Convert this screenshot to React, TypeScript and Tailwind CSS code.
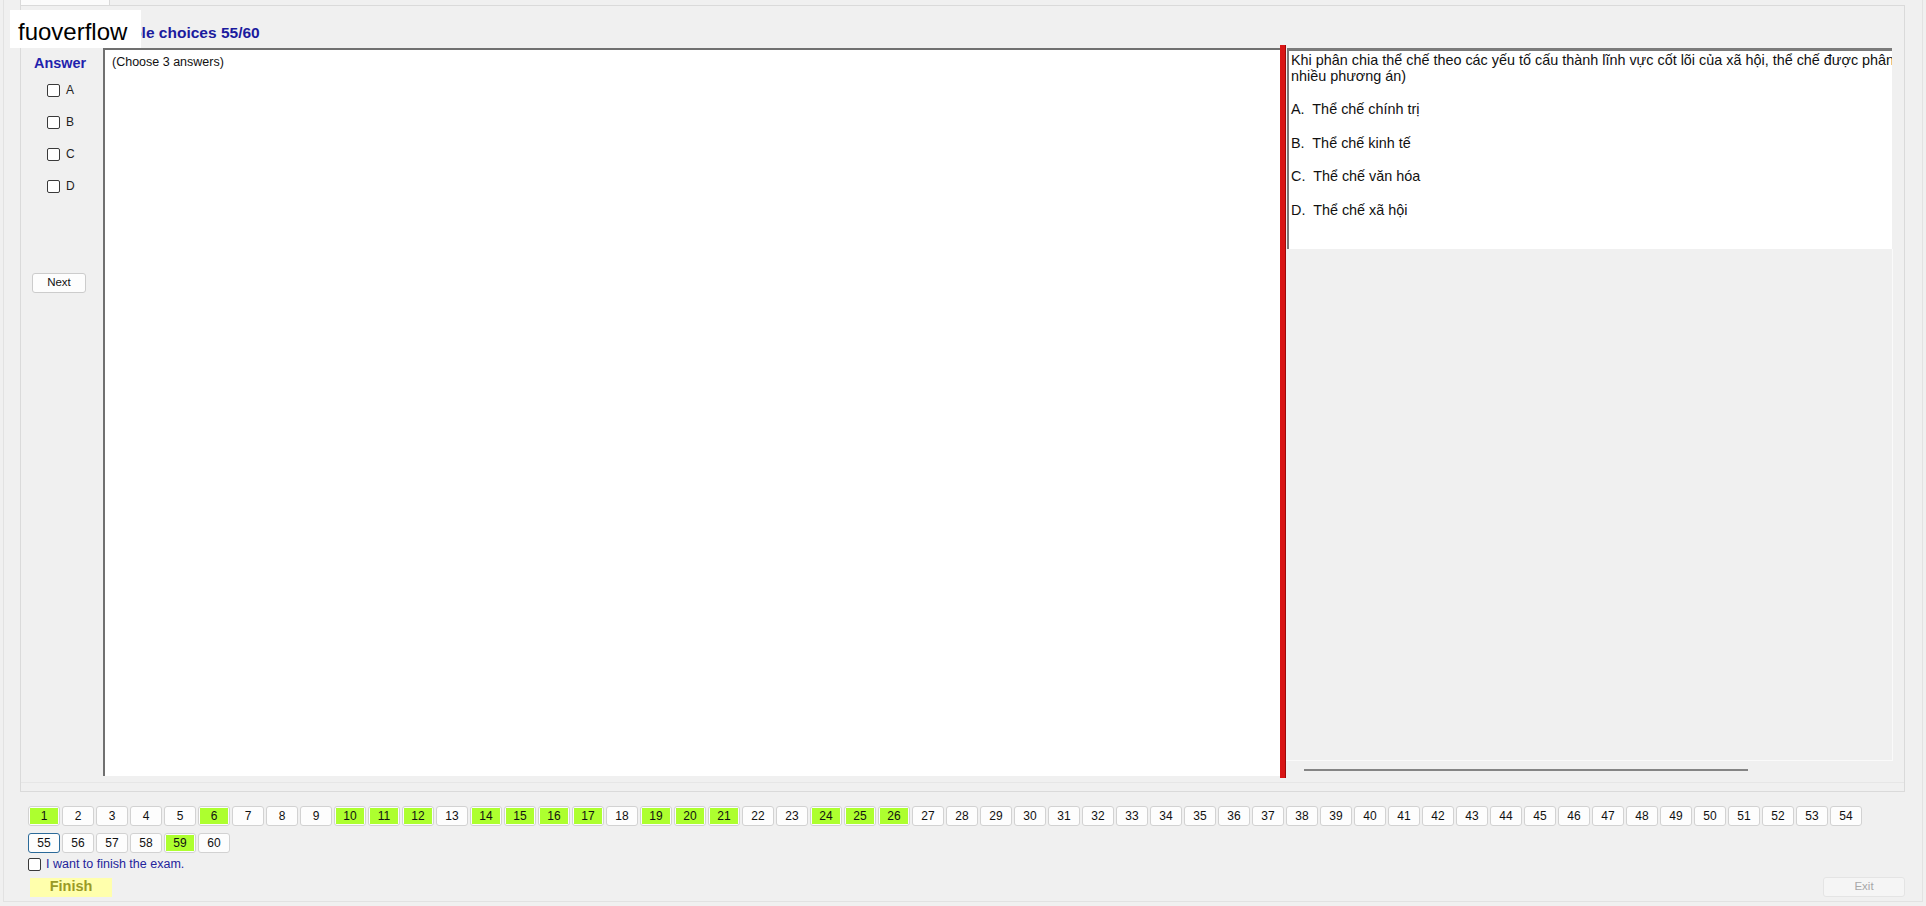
import React from "react";

const answered = new Set([1, 6, 10, 11, 12, 14, 15, 16, 17, 19, 20, 21, 24, 25, 26, 59]);

function NumButton({ n, current }: { n: number; current?: boolean }) {
  const done = answered.has(n);
  return (
    <div
      className={
        current
          ? "w-[32px] h-[20px] rounded-[3px] border border-[#2b6a99] bg-[#fdfdfd] flex items-center justify-center text-[12px] text-[#111]"
          : "w-[32px] h-[20px] rounded-[3px] border border-[#d2d2d2] bg-[#fdfdfd] p-[1px] text-[12px] text-[#111]"
      }
    >
      {current ? (
        n
      ) : (
        <div className={done ? "w-full h-full bg-[#adff2f] flex items-center justify-center" : "w-full h-full flex items-center justify-center"}>
          {n}
        </div>
      )}
    </div>
  );
}

function Box() {
  return <div className="w-[13px] h-[13px] rounded-[2px] border border-[#3a3a3a] bg-white" />;
}

export default function App() {
  const row1 = Array.from({ length: 54 }, (_, i) => i + 1);
  const row2 = [55, 56, 57, 58, 59, 60];
  const options = ["Thể chế chính trị", "Thể chế kinh tế", "Thể chế văn hóa", "Thể chế xã hội"];

  return (
    <div className="relative w-[1926px] h-[906px] overflow-hidden bg-[#f0f0f0] px-[3px] pb-[4px] font-['Liberation_Sans',Arial,sans-serif] text-[#111]">
      <div className="h-[902px] border-x border-b border-[#e2e2e2] flex flex-col">
        {/* tab control */}
        <div className="ml-[16px] w-[1885px] flex flex-col">
          <div className="h-[5px] flex">
            <div className="w-[90px] bg-[#fbfbfb] border-x border-[#d9d9d9]" />
          </div>
          <div className="h-[787px] border border-[#dadada] bg-[#f0f0f0] flex flex-col">
            <div className="h-[39px] flex items-center pl-[75px] pt-[14px]">
              <span className="text-[15.5px] font-bold text-[#1b1b9e]">Multiple choices 55/60</span>
            </div>

            <div className="h-[733px] flex">
              {/* answer sidebar */}
              <div className="w-[82px] flex flex-col pl-[11px] pt-[10px]">
                <div className="ml-[2px] text-[14.4px] leading-[17px] font-bold text-[#1f22ad]">Answer</div>
                <div className="mt-[2px] flex flex-col">
                  {["A", "B", "C", "D"].map((l) => (
                    <div key={l} className="h-[32px] flex items-center gap-[6px] ml-[15px]">
                      <Box />
                      <span className="text-[12px] text-[#222]">{l}</span>
                    </div>
                  ))}
                </div>
                <div className="mt-[71px] w-[54px] h-[20px] rounded-[3px] border border-[#cccccc] bg-[#fdfdfd] flex items-center justify-center text-[11.5px]">
                  Next
                </div>
              </div>

              {/* left content */}
              <div className="flex-1 mt-[3px] mb-[2px] bg-white border-l-2 border-t-2 border-[#707070] pl-[7px] pt-[5px]">
                <div className="text-[12.5px] leading-[15px] text-[#111]">(Choose 3 answers)</div>
              </div>

              {/* splitter */}
              <div className="w-[6px] bg-[#d91515] border-r border-[#9c0a0a]" />

              {/* right pane */}
              <div className="w-[607px] flex flex-col">
                <div className="mt-[3px] mx-[1px] h-[201px] bg-white border-t-[3px] border-l-2 border-[#7b7b7b] pl-[2px] pt-[1px] overflow-hidden text-[14.4px] leading-[16px] text-[#111]">
                  <div className="whitespace-nowrap">
                    Khi phân chia thể chế theo các yếu tố cấu thành lĩnh vực cốt lõi của xã hội, thể chế được phân chia thành (Chọn
                  </div>
                  <div>nhiều phương án)</div>
                  {options.map((o, i) => (
                    <div key={o} className={i === 0 ? "mt-[17px] whitespace-pre" : "mt-[17.5px] whitespace-pre"}>
                      {String.fromCharCode(65 + i) + ".  " + o}
                    </div>
                  ))}
                </div>
                <div className="flex-1 border-r border-[#fafafa]" />
                <div className="h-[18px] border-t border-[#fafafa] pt-[8px] pl-[18px]">
                  <div className="w-[444px] h-[2px] bg-[#858585]" />
                </div>
              </div>
              <div className="w-[11px]" />
            </div>

            <div className="mt-[4px] border-t border-[#e6e6e6]" />
          </div>
        </div>

        {/* bottom controls */}
        <div className="flex-1 flex flex-col pl-[24px] pt-[14px]">
          <div className="flex gap-[2px]">
            {row1.map((n) => (
              <NumButton key={n} n={n} />
            ))}
          </div>
          <div className="flex gap-[2px] mt-[7px]">
            {row2.map((n) => (
              <NumButton key={n} n={n} current={n === 55} />
            ))}
          </div>
          <div className="mt-[2px] flex items-center gap-[5px]">
            <Box />
            <span className="text-[12.5px] text-[#24249c]">I want to finish the exam.</span>
          </div>
          <div className="mt-[4px] flex items-start justify-between pr-[17px]">
            <div className="ml-[2px] w-[82px] h-[19px] bg-[#ffffac] flex items-center justify-center text-[14.5px] font-bold text-[#9a9a26]">
              Finish
            </div>
            <div className="-mt-[1px] w-[82px] h-[20px] rounded-[3px] border border-[#e4e4e4] bg-[#f5f5f5] flex items-center justify-center text-[11.5px] text-[#a8a8a8]">
              Exit
            </div>
          </div>
        </div>
      </div>

      {/* watermark */}
      <div className="absolute left-[10px] top-[10px] w-[131px] h-[38px] bg-white pl-[8px] pt-[6px] flex items-center text-[24px] text-black">
        fuoverflow
      </div>
    </div>
  );
}
